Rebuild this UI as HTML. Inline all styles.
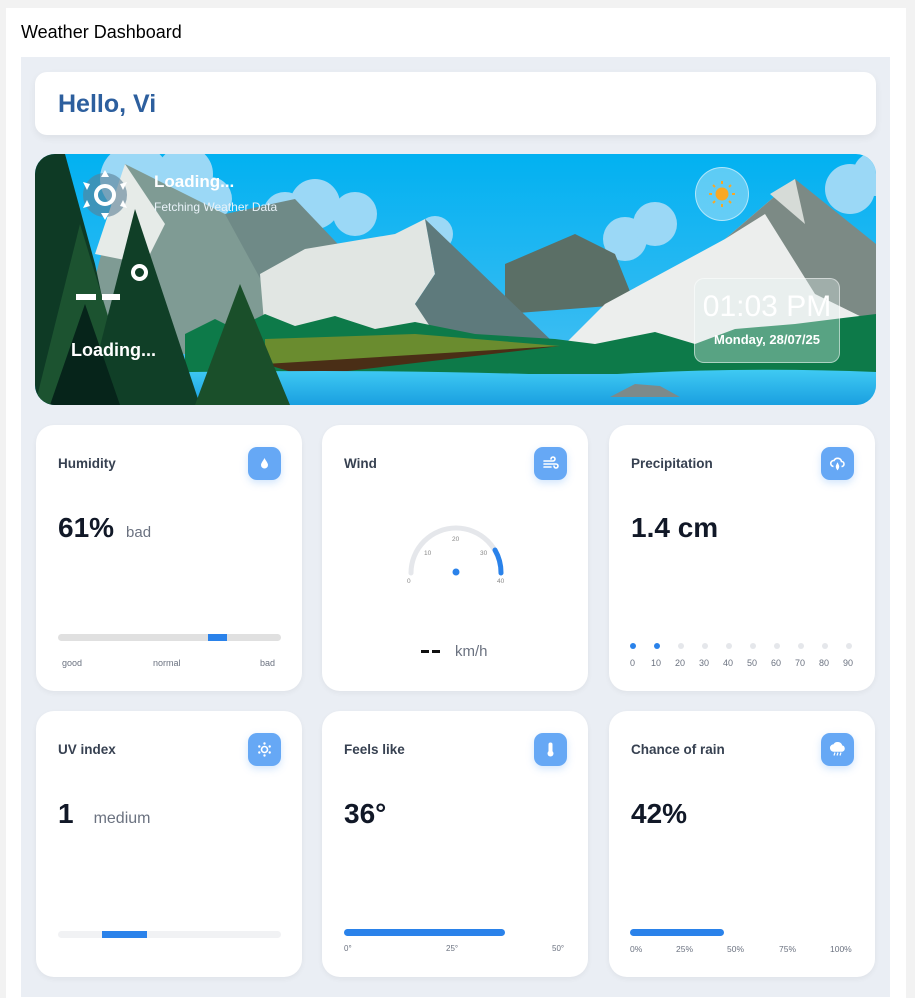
<!DOCTYPE html>
<html><head><meta charset="utf-8"><style>
*{box-sizing:border-box;margin:0;padding:0}
body{width:915px;height:991px;background:#f2f2f2;font-family:"Liberation Sans",sans-serif;position:relative;overflow:hidden}
.outer{position:absolute;left:6px;top:8px;width:900px;height:990px;background:#fff}
.title{position:absolute;left:21px;top:22px;font-size:18px;color:#000}
.inner{position:absolute;left:21px;top:57px;width:869px;height:940px;background:#eaeef4}
.hello{position:absolute;left:35px;top:72px;width:841px;height:63px;background:#fff;border-radius:12px;box-shadow:0 3px 8px rgba(0,0,0,.06)}
.hello span{position:absolute;left:23px;top:18px;font-size:25px;font-weight:bold;color:#2d5f9e}
.hero{position:absolute;left:35px;top:154px;width:841px;height:251px;border-radius:20px;overflow:hidden}
.card{position:absolute;width:266px;height:266px;background:#fff;border-radius:18px;box-shadow:0 2px 6px rgba(0,0,0,.05)}
.ct{position:absolute;left:22px;top:31px;font-size:13.5px;font-weight:bold;color:#374151}
.ic{position:absolute;left:212px;top:22px;width:33px;height:33px;background:#66a8f5;border-radius:9px;box-shadow:0 3px 8px rgba(102,168,245,.3)}
.ic svg{position:absolute;left:8px;top:8px}
.big{position:absolute;left:22px;top:87px;font-size:28px;font-weight:bold;color:#111827}
.sub{font-size:16px;font-weight:normal;color:#6b7280;margin-left:12px}
.lbl{position:absolute;font-size:9px;color:#6b7280}
</style></head><body>
<div class="outer"></div>
<div class="title">Weather Dashboard</div>
<div class="inner"></div>
<div class="hello"><span>Hello, Vi</span></div>
<div class="hero">
<svg width="841" height="251" viewBox="0 0 841 251">
<defs><linearGradient id="sky" x1="0" y1="0" x2="0" y2="1"><stop offset="0" stop-color="#02b1f1"/><stop offset="1" stop-color="#4cc0f3"/></linearGradient>
<linearGradient id="lake" x1="0" y1="0" x2="0" y2="1"><stop offset="0" stop-color="#3fcaf3"/><stop offset="1" stop-color="#1a9fe0"/></linearGradient></defs>
<rect width="841" height="251" fill="url(#sky)"/>
<g fill="#9bd8f6">
<circle cx="100" cy="25" r="35"/><circle cx="150" cy="20" r="28"/><circle cx="175" cy="45" r="22"/><circle cx="250" cy="60" r="22"/><circle cx="280" cy="50" r="25"/><circle cx="320" cy="60" r="22"/><circle cx="220" cy="80" r="20"/><circle cx="400" cy="80" r="18"/><circle cx="590" cy="85" r="22"/><circle cx="620" cy="70" r="22"/><circle cx="815" cy="35" r="25"/><circle cx="840" cy="20" r="22"/>
</g>
<polygon points="90,10 190,60 300,150 180,200 40,200" fill="#7f9b94"/>
<polygon points="90,10 130,70 110,110 60,100" fill="#e6ebe8"/>
<polygon points="190,60 260,45 360,150 250,170" fill="#6f8a87"/>
<polygon points="470,110 540,80 580,100 600,150 470,160" fill="#5b6f66"/>
<polygon points="225,120 270,95 360,80 390,65 400,120 380,150 410,180 230,180" fill="#e1e6e3"/>
<polygon points="390,65 520,190 400,180 380,150 400,120" fill="#5e7a7c"/>
<polygon points="570,150 690,85 760,25 800,110 841,150 841,190 530,190" fill="#eceeed"/>
<polygon points="690,85 760,25 841,90 841,170 780,140 730,60" fill="#7c8a85"/>
<polygon points="735,40 760,25 770,70" fill="#d6dbd7"/>
<polygon points="150,180 180,165 200,175 230,160 260,172 300,162 340,175 380,168 440,180 520,185 560,190 620,178 660,190 700,175 760,170 800,165 841,160 841,220 150,220" fill="#0d7a49"/>
<polygon points="230,185 380,180 525,192 280,210 230,212" fill="#6a8c2f"/>
<polygon points="230,210 525,192 270,222" fill="#4a2e16"/>
<path d="M0 222 Q300 212 550 222 Q700 212 841 218 L841 251 L0 251Z" fill="url(#lake)"/>
<polygon points="575,243 600,230 625,232 645,243" fill="#7c8a8a"/>
<polygon points="0,0 30,0 60,110 90,251 0,251" fill="#0e3a25"/>
<polygon points="45,70 100,251 0,251" fill="#1c5330"/>
<polygon points="100,55 165,251 50,251" fill="#103f27"/>
<polygon points="205,130 255,251 160,251" fill="#1a4f2a"/>
<polygon points="50,150 85,251 15,251" fill="#06241a"/>
</svg>
<svg style="position:absolute;left:44px;top:14px" width="52" height="54" viewBox="0 0 52 54"><circle cx="26" cy="27" r="22" fill="#5c7f95" opacity=".6"/><g fill="#fff"><polygon points="26,2 30,9 22,9"/><polygon points="26,52 30,45 22,45"/><polygon points="4,14 11,16 8,22"/><polygon points="48,14 41,16 44,22"/><polygon points="4,40 11,38 8,32"/><polygon points="48,40 41,38 44,32"/></g><circle cx="26" cy="27" r="9" fill="none" stroke="#fff" stroke-width="4"/></svg>
<div style="position:absolute;left:119px;top:18px;color:#fff;font-weight:bold;font-size:17px">Loading...</div>
<div style="position:absolute;left:119px;top:46px;color:#e8f2f8;font-size:12px">Fetching Weather Data</div>
<div style="position:absolute;left:41px;top:140px;width:20px;height:6px;background:#fff"></div>
<div style="position:absolute;left:67px;top:140px;width:18px;height:6px;background:#fff"></div>
<div style="position:absolute;left:96px;top:110px;width:17px;height:17px;border:4px solid #fff;border-radius:50%"></div>
<div style="position:absolute;left:36px;top:186px;color:#fff;font-weight:bold;font-size:18px">Loading...</div>
<div style="position:absolute;left:660px;top:13px;width:54px;height:54px;border-radius:50%;background:rgba(200,235,250,.45);border:1px solid rgba(255,255,255,.5)"></div>
<svg style="position:absolute;left:672px;top:25px" width="30" height="30" viewBox="0 0 30 30"><circle cx="15" cy="15" r="6.5" fill="#f9a825"/><g stroke="#f9a825" stroke-width="2"><line x1="15" y1="2" x2="15" y2="5"/><line x1="15" y1="25" x2="15" y2="28"/><line x1="2" y1="15" x2="5" y2="15"/><line x1="25" y1="15" x2="28" y2="15"/><line x1="6" y1="6" x2="8" y2="8"/><line x1="22" y1="22" x2="24" y2="24"/><line x1="6" y1="24" x2="8" y2="22"/><line x1="22" y1="8" x2="24" y2="6"/></g></svg>
<div style="position:absolute;left:659px;top:124px;width:146px;height:85px;border-radius:10px;background:rgba(230,240,240,.35);border:1px solid rgba(255,255,255,.5)"></div>
<div style="position:absolute;left:659px;top:136px;width:146px;text-align:center;color:#fff;font-size:30px;font-weight:300">01:03 PM</div>
<div style="position:absolute;left:659px;top:178px;width:146px;text-align:center;color:#fff;font-size:13px;font-weight:bold">Monday, 28/07/25</div>
</div>

<div class="card" style="left:36px;top:425px">
<div class="ct">Humidity</div>
<div class="ic"><svg width="17" height="17" viewBox="0 0 17 17"><path d="M8.5 3 C10 6 12 8 12 10 A3.5 3.5 0 0 1 5 10 C5 8 7 6 8.5 3Z" fill="#fff"/></svg></div>
<div class="big">61%<span class="sub" style="font-size:15px">bad</span></div>
<div style="position:absolute;left:22px;top:209px;width:223px;height:7px;background:#e0e0e0;border-radius:4px"></div>
<div style="position:absolute;left:172px;top:209px;width:19px;height:7px;background:#2a82ea"></div>
<div class="lbl" style="left:26px;top:233px">good</div>
<div class="lbl" style="left:117px;top:233px">normal</div>
<div class="lbl" style="left:224px;top:233px">bad</div>
</div>

<div class="card" style="left:322px;top:425px">
<div class="ct">Wind</div>
<div class="ic"><svg width="17" height="17" viewBox="0 0 17 17" fill="none" stroke="#fff" stroke-width="1.6" stroke-linecap="round"><path d="M2 6h9a2 2 0 1 0-2-2"/><path d="M2 9h12a2 2 0 1 1-2 2"/><path d="M2 12h7"/></svg></div>
<svg style="position:absolute;left:80px;top:95px" width="110" height="70" viewBox="0 0 110 70"><path d="M9 53 A45 45 0 0 1 99 53" fill="none" stroke="#e5e7eb" stroke-width="5" stroke-linecap="round"/><path d="M93 30 A45 45 0 0 1 99 53" fill="none" stroke="#2a82ea" stroke-width="5" stroke-linecap="round"/><circle cx="54" cy="52" r="3.5" fill="#2a82ea"/><g font-size="6.5" fill="#888" font-family="Liberation Sans"><text x="5" y="63">0</text><text x="22" y="35">10</text><text x="50" y="21">20</text><text x="78" y="35">30</text><text x="95" y="63">40</text></g></svg>
<div style="position:absolute;left:99px;top:225px;width:8px;height:3px;background:#111"></div>
<div style="position:absolute;left:110px;top:225px;width:8px;height:3px;background:#111"></div>
<div style="position:absolute;left:133px;top:218px;font-size:15px;color:#6b7280">km/h</div>
</div>

<div class="card" style="left:609px;top:425px">
<div class="ct">Precipitation</div>
<div class="ic"><svg width="17" height="17" viewBox="0 0 17 17" fill="none" stroke="#fff" stroke-width="1.6"><path d="M4.5 11.5 A3 3 0 0 1 5 5.5 A4 4 0 0 1 12.5 6.5 A2.5 2.5 0 0 1 12.5 11.5"/><path d="M8.5 9 C9.5 11 10 12 8.5 14 C7 12 7.5 11 8.5 9Z" fill="#fff"/></svg></div>
<div class="big">1.4 cm</div>
<div style="position:absolute;left:21px;top:218px;width:6px;height:6px;border-radius:50%;background:#2a82ea"></div>
<div style="position:absolute;left:45px;top:218px;width:6px;height:6px;border-radius:50%;background:#2a82ea"></div>
<div style="position:absolute;left:69px;top:218px;width:6px;height:6px;border-radius:50%;background:#e5e7eb"></div>
<div style="position:absolute;left:93px;top:218px;width:6px;height:6px;border-radius:50%;background:#e5e7eb"></div>
<div style="position:absolute;left:117px;top:218px;width:6px;height:6px;border-radius:50%;background:#e5e7eb"></div>
<div style="position:absolute;left:141px;top:218px;width:6px;height:6px;border-radius:50%;background:#e5e7eb"></div>
<div style="position:absolute;left:165px;top:218px;width:6px;height:6px;border-radius:50%;background:#e5e7eb"></div>
<div style="position:absolute;left:189px;top:218px;width:6px;height:6px;border-radius:50%;background:#e5e7eb"></div>
<div style="position:absolute;left:213px;top:218px;width:6px;height:6px;border-radius:50%;background:#e5e7eb"></div>
<div style="position:absolute;left:237px;top:218px;width:6px;height:6px;border-radius:50%;background:#e5e7eb"></div>
<div class="lbl" style="left:21px;top:233px">0</div><div class="lbl" style="left:42px;top:233px">10</div><div class="lbl" style="left:66px;top:233px">20</div><div class="lbl" style="left:90px;top:233px">30</div><div class="lbl" style="left:114px;top:233px">40</div><div class="lbl" style="left:138px;top:233px">50</div><div class="lbl" style="left:162px;top:233px">60</div><div class="lbl" style="left:186px;top:233px">70</div><div class="lbl" style="left:210px;top:233px">80</div><div class="lbl" style="left:234px;top:233px">90</div>
</div>

<div class="card" style="left:36px;top:711px">
<div class="ct">UV index</div>
<div class="ic"><svg width="17" height="17" viewBox="0 0 17 17"><circle cx="8.5" cy="8.5" r="3" fill="none" stroke="#fff" stroke-width="1.6"/><g fill="#fff"><circle cx="8.5" cy="2.5" r="1.2"/><circle cx="8.5" cy="14.5" r="1.2"/><circle cx="3.3" cy="5.5" r="1.2"/><circle cx="13.7" cy="5.5" r="1.2"/><circle cx="3.3" cy="11.5" r="1.2"/><circle cx="13.7" cy="11.5" r="1.2"/></g></svg></div>
<div class="big">1<span class="sub" style="margin-left:20px">medium</span></div>
<div style="position:absolute;left:22px;top:220px;width:223px;height:7px;background:#f1f2f4;border-radius:4px"></div>
<div style="position:absolute;left:66px;top:220px;width:45px;height:7px;background:#2a82ea"></div>
</div>

<div class="card" style="left:322px;top:711px">
<div class="ct">Feels like</div>
<div class="ic"><svg width="17" height="17" viewBox="0 0 17 17"><rect x="6.5" y="1.5" width="4" height="10" rx="2" fill="#fff"/><circle cx="8.5" cy="12.5" r="3" fill="#fff"/></svg></div>
<div class="big">36°</div>
<div style="position:absolute;left:22px;top:218px;width:161px;height:7px;background:#2a82ea;border-radius:4px"></div>
<div class="lbl" style="left:22px;top:233px;font-size:8px">0°</div>
<div class="lbl" style="left:124px;top:233px;font-size:8px">25°</div>
<div class="lbl" style="left:230px;top:233px;font-size:8px">50°</div>
</div>

<div class="card" style="left:609px;top:711px">
<div class="ct">Chance of rain</div>
<div class="ic"><svg width="17" height="17" viewBox="0 0 17 17" fill="none" stroke="#fff" stroke-width="1.6"><path d="M4.5 10 A3 3 0 0 1 5 4 A4 4 0 0 1 12.5 5 A2.5 2.5 0 0 1 12.5 10Z" fill="#fff"/><path d="M6 11.5l-1 3M9 11.5l-1 3M12 11.5l-1 3" stroke-width="1.2"/></svg></div>
<div class="big">42%</div>
<div style="position:absolute;left:21px;top:218px;width:94px;height:7px;background:#2a82ea;border-radius:4px"></div>
<div class="lbl" style="left:21px;top:233px;font-size:8.5px">0%</div>
<div class="lbl" style="left:67px;top:233px;font-size:8.5px">25%</div>
<div class="lbl" style="left:118px;top:233px;font-size:8.5px">50%</div>
<div class="lbl" style="left:170px;top:233px;font-size:8.5px">75%</div>
<div class="lbl" style="left:221px;top:233px;font-size:8.5px">100%</div>
</div>
</body></html>
